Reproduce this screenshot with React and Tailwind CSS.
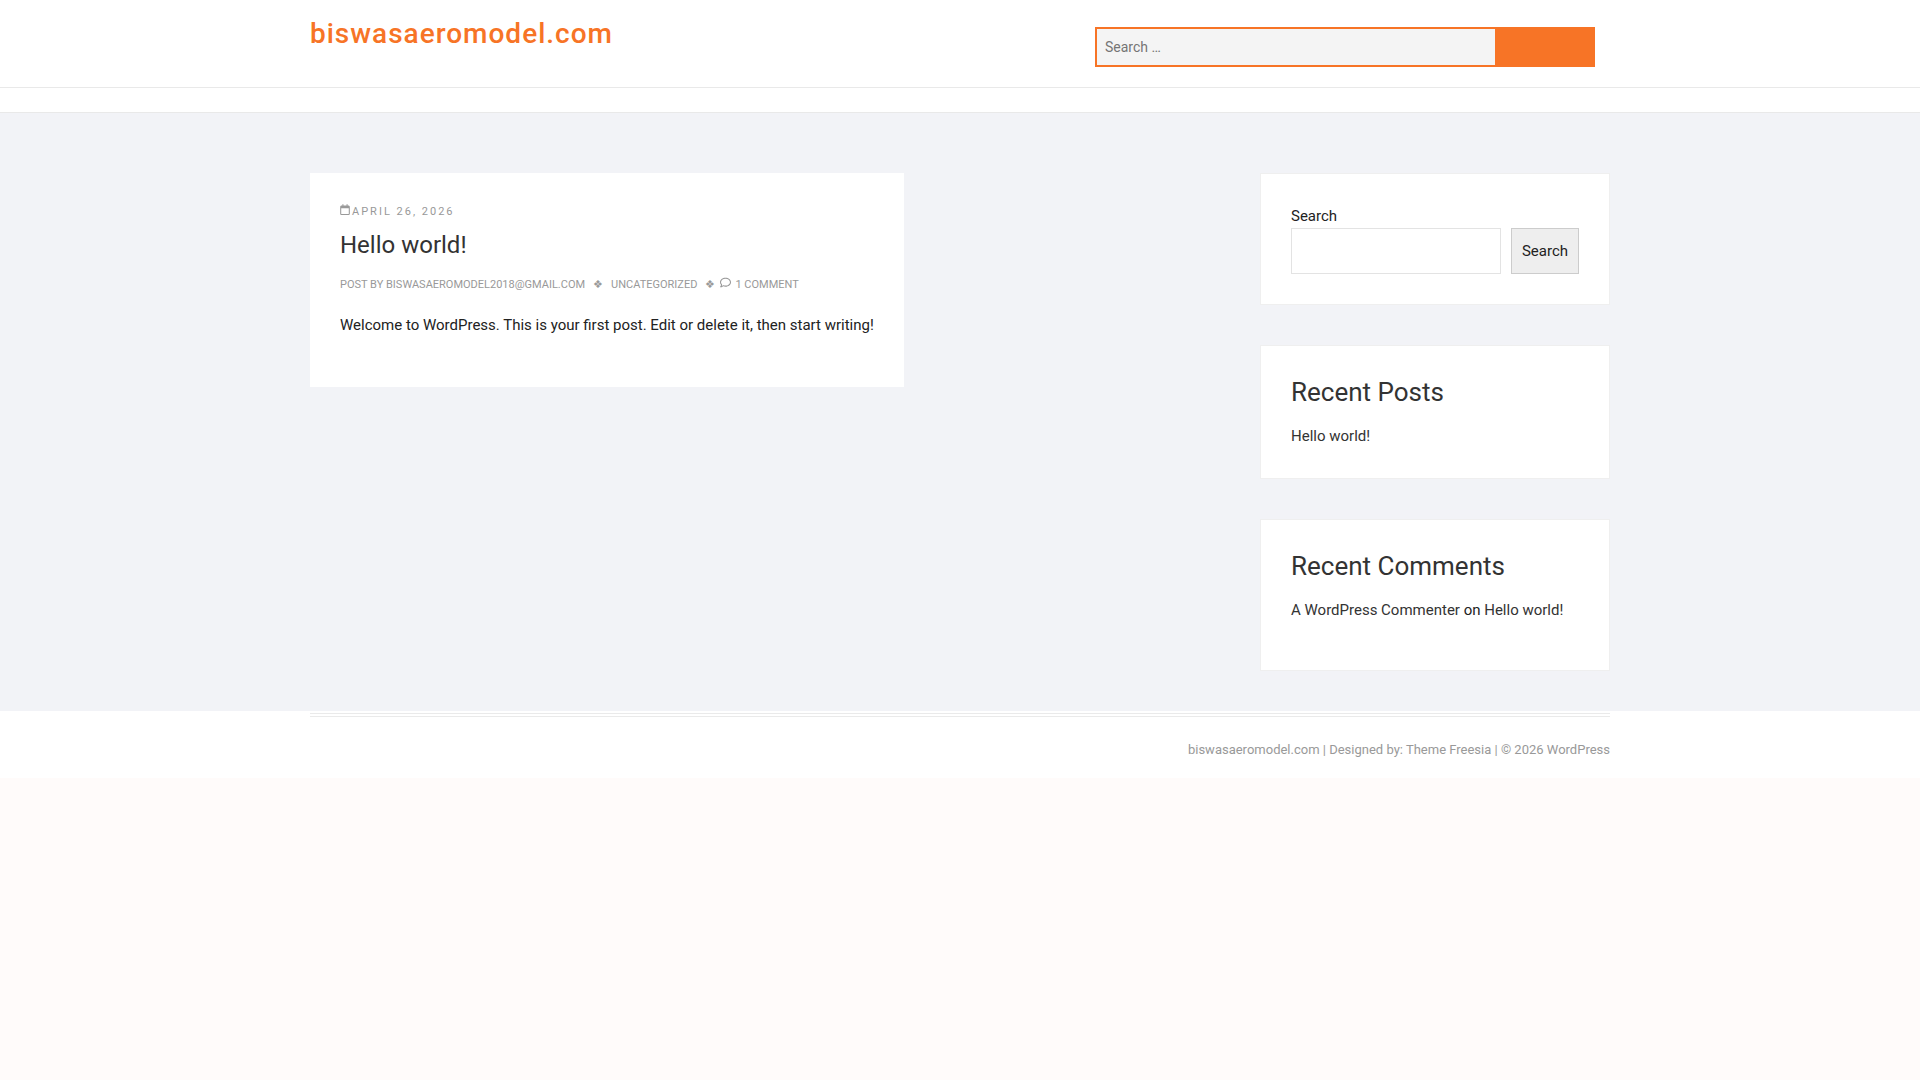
import { FaRegCalendar, FaRegComment } from 'react-icons/fa6'

function SiteHeader() {
  return (
    <header className="bg-white">
      <div className="border-b border-[#e9e9e9] pb-5">
        <div className="mx-auto flex max-w-[1300px] flex-wrap items-start justify-between">
          <h1 className="pt-4 text-[28px] leading-9 font-medium tracking-[1px] text-[#f77426]">
            <a href="#home">biswasaeromodel.com</a>
          </h1>
          <form
            className="mt-[27px] mr-[15px] flex h-10 w-full max-w-[500px] border-2 border-[#f77426] bg-[#f77426]"
            onSubmit={(e) => e.preventDefault()}
          >
            <input
              type="search"
              placeholder="Search …"
              aria-label="Search for"
              className="min-w-0 flex-1 bg-[#f4f4f4] px-2 text-sm text-[#222] outline-none placeholder:text-[#757575]"
            />
            <button type="submit" aria-label="Submit search" className="w-[98px] shrink-0" />
          </form>
        </div>
      </div>
      <div className="h-[25px] border-b border-[#e9e9e9]" />
    </header>
  )
}

function Post() {
  return (
    <article className="w-fit bg-white p-[30px] pb-[50px]">
      <div className="flex items-baseline gap-[2px] text-[11px] leading-[18px] tracking-[2px] text-[#999] uppercase">
        <FaRegCalendar className="h-[11px] w-[10px]" />
        <a href="#date">April 26, 2026</a>
      </div>
      <h2 className="mt-2 text-2xl leading-8 text-[#333]">
        <a href="#post">Hello world!</a>
      </h2>
      <div className="mt-[15px] flex flex-wrap items-baseline text-[11px] leading-[18px] text-[#999] uppercase">
        <span>
          Post by <a href="#author">biswasaeromodel2018@gmail.com</a>
        </span>
        <span className="mx-2">❖</span>
        <a href="#category">Uncategorized</a>
        <span className="ml-2">❖</span>
        <FaRegComment className="mr-1 ml-[5px] size-[11px]" />
        <a href="#comments">1 Comment</a>
      </div>
      <p className="mt-[19px]">
        Welcome to WordPress. This is your first post. Edit or delete it, then start writing!
      </p>
    </article>
  )
}

function Widget({ title, children }) {
  return (
    <section className="border border-[#efefef] bg-white p-[30px]">
      {title && <h2 className="mb-4 text-[26px] leading-8 text-[#333]">{title}</h2>}
      {children}
    </section>
  )
}

function Sidebar() {
  return (
    <aside className="flex w-[350px] shrink-0 flex-col gap-10">
      <Widget>
        <form onSubmit={(e) => e.preventDefault()}>
          <label htmlFor="widget-search" className="block">
            Search
          </label>
          <div className="flex gap-[10px]">
            <input
              id="widget-search"
              type="search"
              className="h-[46px] min-w-0 flex-1 border border-[#e3e3e3] bg-white px-2 outline-none"
            />
            <button type="submit" className="h-[46px] border border-[#ccc] bg-[#eee] px-[10px]">
              Search
            </button>
          </div>
        </form>
      </Widget>
      <Widget title="Recent Posts">
        <ul className="text-[#333]">
          <li>
            <a href="#post">Hello world!</a>
          </li>
        </ul>
      </Widget>
      <Widget title="Recent Comments">
        <ol className="pb-[18px]">
          <li>
            <a href="#commenter" className="text-[#333]">A WordPress Commenter</a> on{' '}
            <a href="#post" className="text-[#333]">Hello world!</a>
          </li>
        </ol>
      </Widget>
    </aside>
  )
}

function SiteFooter() {
  return (
    <footer className="bg-white pt-[2px]">
      <div className="mx-auto max-w-[1300px] border-t-4 border-double border-[#eaeaea] pt-[21px] pb-4 text-right text-[13px] leading-6 text-[#999]">
        <a href="#home">biswasaeromodel.com</a> | Designed by: <a href="#theme">Theme Freesia</a> | © 2026{' '}
        <a href="#wordpress">WordPress</a>
      </div>
    </footer>
  )
}

export default function App() {
  return (
    <div className="min-h-screen bg-[#fffbfa] font-['Roboto',sans-serif] text-[15px] leading-6 text-[#222]">
      <SiteHeader />
      <main className="bg-[#f2f3f7]">
        <div className="mx-auto flex max-w-[1300px] items-start justify-between gap-10 pt-[60px] pb-10">
          <Post />
          <Sidebar />
        </div>
      </main>
      <SiteFooter />
    </div>
  )
}
